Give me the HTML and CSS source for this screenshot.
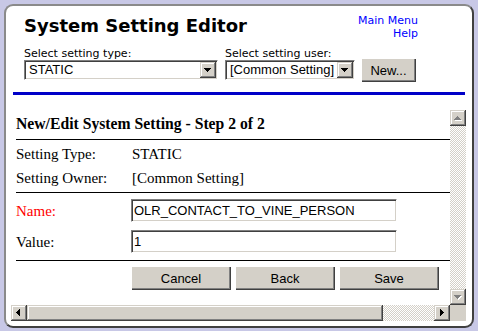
FILE: index.html
```html
<!DOCTYPE html>
<html>
<head>
<meta charset="utf-8">
<title>System Setting Editor</title>
<link rel="stylesheet" href="styles.css">
</head>
<body>
<div class="window">
  <div class="header">
    <h1 class="title">System Setting Editor</h1>
    <div class="links">
      <a href="#">Main Menu</a>
      <a href="#">Help</a>
    </div>
  </div>
  <div class="pickers">
    <div class="field field-type">
      <div class="label">Select setting type:</div>
      <div class="select">
        <span class="select-text">STATIC</span>
        <span class="drop"><svg width="16" height="16" viewBox="0 0 16 16" shape-rendering="crispEdges"><path d="M4 6h7v1H4zM5 7h5v1H5zM6 8h3v1H6zM7 9h1v1H7z" fill="#000"/></svg></span>
      </div>
    </div>
    <div class="field field-user">
      <div class="label">Select setting user:</div>
      <div class="select">
        <span class="select-text">[Common Setting]</span>
        <span class="drop"><svg width="16" height="16" viewBox="0 0 16 16" shape-rendering="crispEdges"><path d="M4 6h7v1H4zM5 7h5v1H5zM6 8h3v1H6zM7 9h1v1H7z" fill="#000"/></svg></span>
      </div>
    </div>
    <button class="btn btn-new">New...</button>
  </div>
  <div class="rule"></div>
  <div class="frame">
    <div class="viewport">
      <div class="page">
        <h2 class="step">New/Edit System Setting - Step 2 of 2</h2>
        <hr class="sep sep-1">
        <div class="info">
          <div class="row"><span class="key">Setting Type:</span><span class="val">STATIC</span></div>
          <div class="row"><span class="key">Setting Owner:</span><span class="val">[Common Setting]</span></div>
        </div>
        <hr class="sep sep-2">
        <div class="form">
          <div class="frow"><label class="key req">Name:</label><input class="txt" type="text" value="OLR_CONTACT_TO_VINE_PERSON"></div>
          <div class="frow"><label class="key">Value:</label><input class="txt" type="text" value="1"></div>
        </div>
        <hr class="sep sep-3">
        <div class="actions">
          <button class="btn btn-act">Cancel</button>
          <button class="btn btn-act">Back</button>
          <button class="btn btn-act">Save</button>
        </div>
      </div>
    </div>
    <div class="vscroll">
      <span class="sbtn"><svg width="16" height="16" viewBox="0 0 16 16" shape-rendering="crispEdges"><path d="M8 7h1v1H8zM7 8h3v1H7zM6 9h5v1H6zM5 10h7v1H5z" fill="#fff"/><path d="M7 6h1v1H7zM6 7h3v1H6zM5 8h5v1H5zM4 9h7v1H4z" fill="#808080"/></svg></span>
      <span class="track"></span>
      <span class="sbtn"><svg width="16" height="16" viewBox="0 0 16 16" shape-rendering="crispEdges"><path d="M5 7h7v1H5zM6 8h5v1H6zM7 9h3v1H7zM8 10h1v1H8z" fill="#fff"/><path d="M4 6h7v1H4zM5 7h5v1H5zM6 8h3v1H6zM7 9h1v1H7z" fill="#808080"/></svg></span>
    </div>
    <div class="hscroll">
      <span class="sbtn"><svg width="16" height="16" viewBox="0 0 16 16" shape-rendering="crispEdges"><path d="M5 7h1v1H5zM6 6h1v3H6zM7 5h1v5H7zM8 4h1v7H8z" fill="#000"/></svg></span>
      <span class="thumb"></span>
      <span class="track"></span>
      <span class="sbtn"><svg width="16" height="16" viewBox="0 0 16 16" shape-rendering="crispEdges"><path d="M6 4h1v7H6zM7 5h1v5H7zM8 6h1v3H8zM9 7h1v1H9z" fill="#000"/></svg></span>
    </div>
    <div class="corner"></div>
  </div>
</div>
</body>
</html>
```

FILE: styles.css
```css
html, body {
  margin: 0;
  padding: 0;
}
body {
  background: #c8c8e6;
  width: 478px;
  height: 331px;
  overflow: hidden;
}
.window {
  box-sizing: border-box;
  margin: 4px 0 0 4px;
  width: 470px;
  height: 324px;
  background: #fff;
  border: 2px solid #404040;
  border-top-color: #8a8a8a;
  border-left-color: #8a8a8a;
  border-radius: 9px;
  overflow: hidden;
}
.header {
  display: flex;
  justify-content: space-between;
  align-items: flex-start;
  padding: 8px 54px 0 18px;
}
.title {
  margin: 1px 0 0;
  font: bold 18px/22px "DejaVu Sans", Verdana, sans-serif;
  color: #000;
}
.links {
  display: flex;
  flex-direction: column;
  align-items: flex-end;
  font: 11px/13px "DejaVu Sans", Verdana, sans-serif;
}
.links a {
  color: #0000ff;
  text-decoration: none;
}
.pickers {
  display: flex;
  align-items: flex-end;
  margin-top: 7px;
  padding-left: 18px;
}
.field {
  display: flex;
  flex-direction: column;
}
.field-type { width: 194px; }
.field-user { width: 130px; margin-left: 7px; }
.label {
  font: 11px/13px "DejaVu Sans", Verdana, sans-serif;
  color: #000;
  white-space: nowrap;
}
.select {
  box-sizing: border-box;
  height: 20px;
  display: flex;
  align-items: center;
  background: #fff;
  border: 1px solid;
  border-color: #808080 #fff #fff #808080;
  box-shadow: inset 1px 1px 0 #404040, inset -1px -1px 0 #d4d0c8;
  padding: 1px 1px 1px 1px;
}
.select-text {
  flex: 1;
  padding-left: 3px;
  font: 13px/16px "Liberation Sans", Arial, sans-serif;
  color: #000;
  white-space: nowrap;
  overflow: hidden;
}
.drop {
  width: 16px;
  height: 16px;
  flex: none;
  background: #d4d0c8;
  box-shadow: inset -1px -1px 0 #404040, inset 1px 1px 0 #d4d0c8, inset -2px -2px 0 #808080, inset 2px 2px 0 #fff;
}
.drop svg, .sbtn svg { display: block; }
.btn {
  box-sizing: border-box;
  border: 0;
  margin: 0;
  padding: 0;
  background: #d4d0c8;
  color: #000;
  font: 13px "Liberation Sans", Arial, sans-serif;
  box-shadow: inset 1px 1px 0 #fff, inset -1px -1px 0 #404040, inset -2px -2px 0 #808080;
}
.btn-new {
  width: 55px;
  height: 24px;
  margin-left: 6px;
  margin-bottom: -2px;
}
.rule {
  height: 3px;
  margin: 12px 7px 0;
  background: #0000c8;
}
.frame {
  display: grid;
  grid-template-columns: 1fr 16px;
  grid-template-rows: 1fr 16px;
  width: 455px;
  height: 211px;
  margin: 15px 0 0 5px;
}
.viewport {
  overflow: hidden;
  background: #fff;
}
.page {
  width: 495px;
  padding: 5px 0 0 5px;
  font: 15px/24px "Liberation Serif", "Times New Roman", serif;
  color: #000;
}
.step {
  margin: 0;
  font: bold 15.7px/17px "Liberation Serif", "Times New Roman", serif;
}
.sep {
  border: 0;
  height: 1px;
  background: #000;
  margin: 0;
}
.sep-1 { margin-top: 7px; }
.info { margin-top: 2px; }
.row { display: flex; height: 24px; }
.sep-2 { margin-top: 2px; }
.key {
  width: 115px;
  flex: none;
}
.val { padding-left: 1px; }
.req { color: #f00; }
.form {
  display: flex;
  flex-direction: column;
  gap: 8px;
  margin-top: 6px;
}
.frow {
  display: flex;
  align-items: center;
  height: 23px;
}
.txt {
  box-sizing: border-box;
  width: 266px;
  height: 23px;
  margin: 0;
  padding: 0 0 0 2px;
  border: 1px solid;
  border-color: #808080 #fff #fff #808080;
  box-shadow: inset 1px 1px 0 #404040, inset -1px -1px 0 #d4d0c8;
  font: 13px "Liberation Sans", Arial, sans-serif;
  color: #000;
  background: #fff;
  outline: none;
}
.sep-3 { margin-top: 7px; }
.actions {
  display: flex;
  gap: 4px;
  margin-top: 5px;
  padding-left: 115px;
}
.btn-act {
  width: 100px;
  height: 24px;
}
.vscroll {
  display: flex;
  flex-direction: column;
}
.hscroll {
  display: flex;
}
.sbtn {
  width: 16px;
  height: 16px;
  flex: none;
  background: #d4d0c8;
  box-shadow: inset -1px -1px 0 #404040, inset 1px 1px 0 #d4d0c8, inset -2px -2px 0 #808080, inset 2px 2px 0 #fff;
}
.track {
  flex: 1;
  background: repeating-conic-gradient(#d4d0c8 0 25%, #fff 0 50%) 0 0 / 2px 2px;
}
.thumb {
  width: 356px;
  flex: none;
  background: #d4d0c8;
  box-shadow: inset -1px -1px 0 #404040, inset 1px 1px 0 #d4d0c8, inset -2px -2px 0 #808080, inset 2px 2px 0 #fff;
}
.corner {
  background: #d4d0c8;
}
```
